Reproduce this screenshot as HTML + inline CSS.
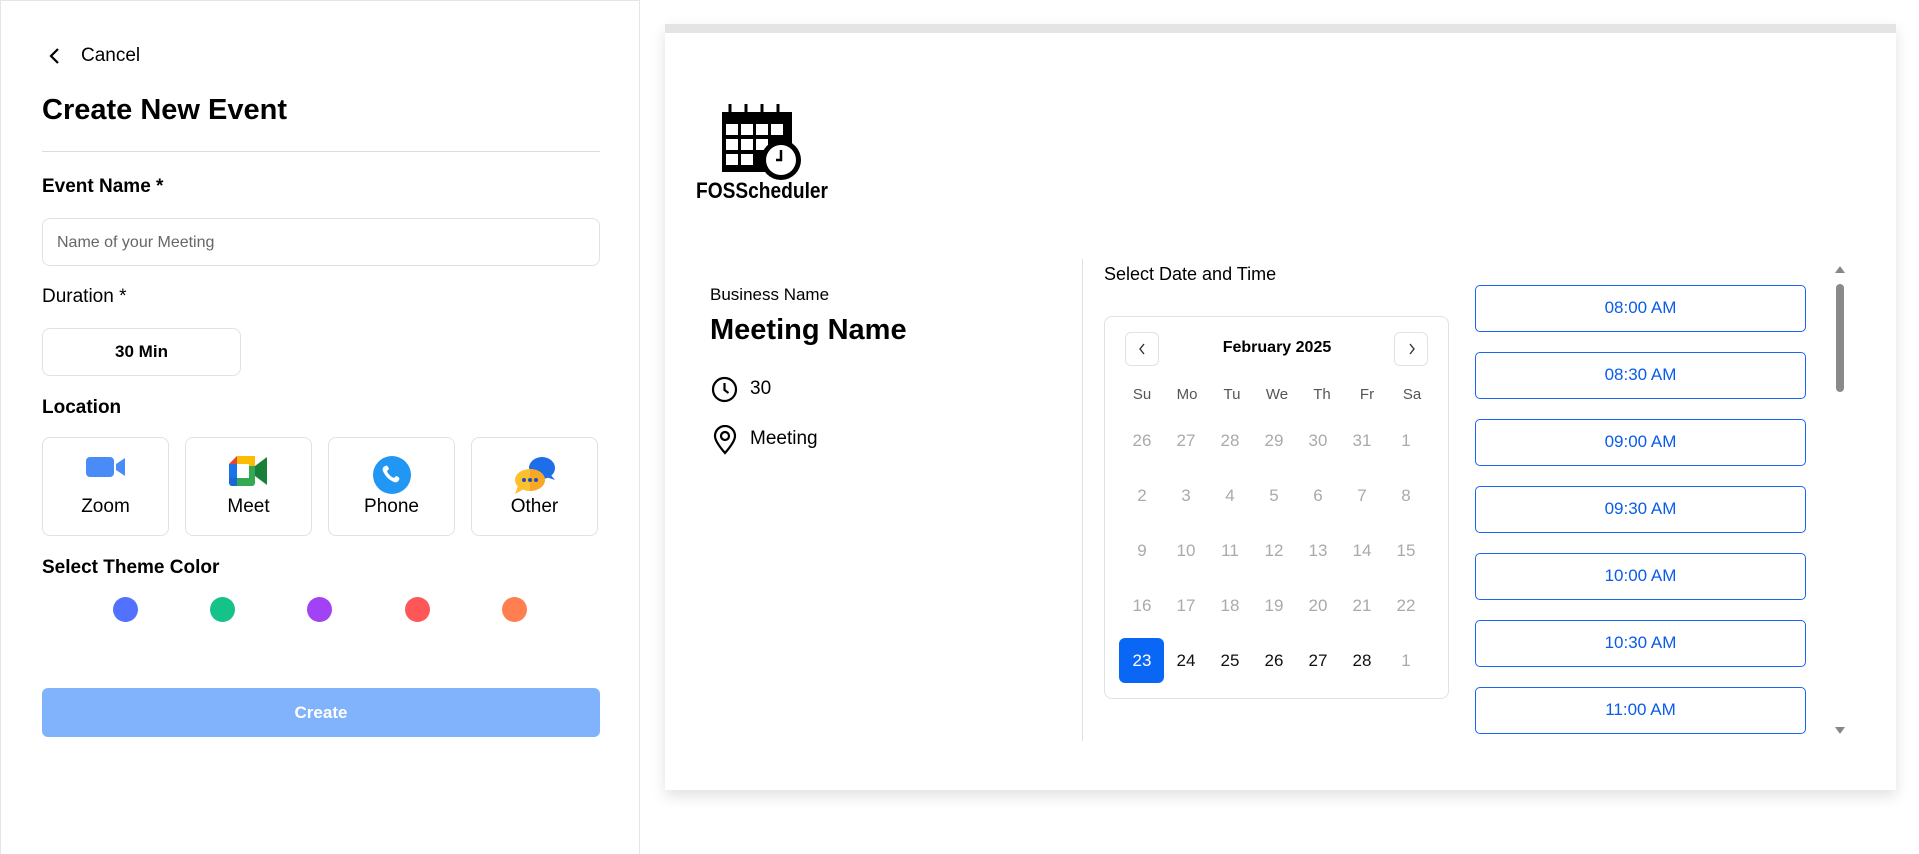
<!DOCTYPE html>
<html><head><meta charset="utf-8"><style>
*{box-sizing:border-box;margin:0;padding:0}
body{width:1919px;height:854px;background:#fff;font-family:"Liberation Sans",sans-serif;position:relative;overflow:hidden;color:#000}
.a{position:absolute}
.left{left:0;top:0;width:640px;height:854px;border-right:1px solid #e5e5e5;border-top:1px solid #e5e5e5;border-left:1px solid #e5e5e5}
.lbl{font-size:19px;font-weight:bold}
.box{border:1px solid #e2e2e2;border-radius:8px;background:#fff}
.loc{top:437px;height:99px;width:127px;text-align:center;font-size:19px}
.loc span{position:absolute;left:0;right:0;top:58px}
.loc svg{position:absolute;left:50%;top:18px;transform:translateX(-50%)}
.dot{width:25px;height:25px;border-radius:50%;top:597px}
.card{left:665px;top:24px;width:1231px;height:766px;background:#fff;box-shadow:0 6px 14px rgba(0,0,0,.12);border-top:9px solid #e4e4e4}
.wd{font-size:15px;color:#555;width:40px;text-align:center}
.d{font-size:17px;color:#aaa;width:44px;text-align:center}
.dk{color:#111}
.slot{left:1475px;width:331px;height:47px;border:1.5px solid #1a66f0;border-radius:5px;color:#0a5ce8;font-size:17px;text-align:center;line-height:44px}
</style></head><body>
<div class="a left"></div>
<svg class="a" style="left:47px;top:47px" width="16" height="18" viewBox="0 0 16 18"><path d="M11 2L4 9l7 7" fill="none" stroke="#000" stroke-width="2.2"/></svg>
<div class="a" style="left:81px;top:45px;font-size:19px">Cancel</div>
<div class="a" style="left:42px;top:94px;font-size:29px;font-weight:bold">Create New Event</div>
<div class="a" style="left:42px;top:151px;width:558px;height:1px;background:#ddd"></div>
<div class="a lbl" style="left:42px;top:176px">Event Name *</div>
<div class="a box" style="left:42px;top:218px;width:558px;height:48px"></div>
<div class="a" style="left:57px;top:234px;font-size:16px;color:#666">Name of your Meeting</div>
<div class="a" style="left:42px;top:286px;font-size:19px">Duration *</div>
<div class="a box" style="left:42px;top:328px;width:199px;height:48px;text-align:center;line-height:46px;font-size:17px;font-weight:bold">30 Min</div>
<div class="a lbl" style="left:42px;top:397px">Location</div>
<div class="a box loc" style="left:42px"><svg width="40" height="22" viewBox="0 0 40 22"><rect x="0" y="1" width="28" height="20" rx="4" fill="#4a8cf7"/><path d="M30 8l9-6v18l-9-6z" fill="#4a8cf7"/></svg><span>Zoom</span></div>
<div class="a box loc" style="left:185px"><svg width="40" height="30" viewBox="0 0 40 30"><path d="M8 0h18v10H0V8z" fill="#fbbc04"/><path d="M0 8h8v14H0z" fill="#1a73e8"/><path d="M0 22h8v8H3a3 3 0 0 1-3-3z" fill="#1967d2"/><path d="M8 0v8H0z" fill="#ea4335"/><path d="M8 22h18v5a3 3 0 0 1-3 3H8z" fill="#34a853"/><path d="M20 10h6v12h-6z" fill="#34a853"/><path d="M26 10l12-9v28l-12-9z" fill="#188038"/><rect x="8" y="8" width="12" height="14" fill="#fff"/></svg><span>Meet</span></div>
<div class="a box loc" style="left:328px"><svg width="38" height="38" viewBox="0 0 38 38"><circle cx="19" cy="19" r="19" fill="#2196f3"/><path d="M12 10c2-1 3 0 4 3l-2 2c1 3 4 6 7 7l2-2c3 1 4 2 3 4-1 2-3 3-5 2-5-2-9-6-11-11-1-2 0-4 2-5z" fill="#fff"/></svg><span>Phone</span></div>
<div class="a box loc" style="left:471px"><svg width="42" height="38" viewBox="0 0 42 38"><ellipse cx="28" cy="12" rx="13" ry="11" fill="#1e6ee8"/><path d="M36 18l5 6-9-3z" fill="#1e6ee8"/><ellipse cx="16" cy="24" rx="15" ry="11" fill="#fbc02d"/><path d="M16 13a15 11 0 0 1 0 22z" fill="#f9a825"/><path d="M4 30l-3 8 9-5z" fill="#fbc02d"/><circle cx="10" cy="24" r="2" fill="#1e4fb8"/><circle cx="16" cy="24" r="2" fill="#1e4fb8"/><circle cx="22" cy="24" r="2" fill="#1e4fb8"/></svg><span>Other</span></div>
<div class="a lbl" style="left:42px;top:557px">Select Theme Color</div>
<div class="a dot" style="left:113px;background:#5271ff"></div>
<div class="a dot" style="left:210px;background:#15c28a"></div>
<div class="a dot" style="left:307px;background:#a142f5"></div>
<div class="a dot" style="left:405px;background:#ff5757"></div>
<div class="a dot" style="left:502px;background:#ff7f50"></div>
<div class="a" style="left:42px;top:688px;width:558px;height:49px;background:#80b3fc;border-radius:6px;color:#fff;font-weight:bold;font-size:17px;text-align:center;line-height:49px">Create</div>

<div class="a card"></div>
<svg class="a" style="left:693px;top:98px" width="140" height="104" viewBox="0 0 140 104">
<rect x="29" y="14" width="70" height="60" fill="#000"/>
<g fill="#fff"><rect x="33" y="26" width="12" height="11"/><rect x="48" y="26" width="12" height="11"/><rect x="63" y="26" width="12" height="11"/><rect x="78" y="26" width="12" height="11"/><rect x="33" y="41" width="12" height="11"/><rect x="48" y="41" width="12" height="11"/><rect x="63" y="41" width="12" height="11"/><rect x="33" y="56" width="12" height="11"/><rect x="48" y="56" width="12" height="11"/></g>
<g fill="none" stroke="#000" stroke-width="3"><path d="M37 16V6M53 16V6M69 16V6M85 16V6"/></g>
<circle cx="88" cy="62" r="20" fill="#000"/><circle cx="88" cy="62" r="15" fill="#fff"/><path d="M88 52v10h-5" stroke="#000" stroke-width="2.5" fill="none"/>
<text x="3" y="100" font-family="Liberation Sans Narrow,Liberation Sans,sans-serif" font-weight="bold" font-size="22" textLength="132" lengthAdjust="spacingAndGlyphs">FOSScheduler</text>
</svg>
<div class="a" style="left:710px;top:285px;font-size:17px">Business Name</div>
<div class="a" style="left:710px;top:314px;font-size:29px;font-weight:bold">Meeting Name</div>
<svg class="a" style="left:711px;top:376px" width="27" height="27" viewBox="0 0 27 27"><circle cx="13.5" cy="13.5" r="11.5" fill="none" stroke="#000" stroke-width="2.2"/><path d="M13.5 7v7l4 3" fill="none" stroke="#000" stroke-width="2.2"/></svg>
<div class="a" style="left:750px;top:378px;font-size:19px">30</div>
<svg class="a" style="left:713px;top:425px" width="24" height="30" viewBox="0 0 24 30"><path d="M12 28C5 20 2 15 2 11a10 10 0 0 1 20 0c0 4-3 9-10 17z" fill="none" stroke="#000" stroke-width="2.2"/><circle cx="12" cy="11" r="4" fill="none" stroke="#000" stroke-width="2.2"/></svg>
<div class="a" style="left:750px;top:428px;font-size:19px">Meeting</div>
<div class="a" style="left:1082px;top:259px;width:1px;height:482px;background:#e2e2e2"></div>
<div class="a" style="left:1104px;top:264px;font-size:18px">Select Date and Time</div>
<div class="a box" style="left:1104px;top:316px;width:345px;height:383px"></div>
<div class="a box" style="left:1125px;top:332px;width:34px;height:34px;border-radius:6px"></div>
<div class="a box" style="left:1394px;top:332px;width:34px;height:34px;border-radius:6px"></div>
<svg class="a" style="left:1137px;top:342px" width="10" height="14"><path d="M7 2L3 7l4 5" fill="none" stroke="#333" stroke-width="1.4"/></svg>
<svg class="a" style="left:1407px;top:342px" width="10" height="14"><path d="M3 2l4 5-4 5" fill="none" stroke="#333" stroke-width="1.4"/></svg>
<div class="a" style="left:1177px;top:339px;width:200px;text-align:center;font-size:16px;font-weight:bold">February 2025</div>
<div class="a" style="left:1122px;top:386px;display:flex;gap:5px">
<div class="wd">Su</div><div class="wd">Mo</div><div class="wd">Tu</div><div class="wd">We</div><div class="wd">Th</div><div class="wd">Fr</div><div class="wd">Sa</div></div>
<div class="a" style="left:1120px;top:430px;line-height:22px">
<div style="display:flex;height:55px"><div class="d">26</div><div class="d">27</div><div class="d">28</div><div class="d">29</div><div class="d">30</div><div class="d">31</div><div class="d">1</div></div>
<div style="display:flex;height:55px"><div class="d">2</div><div class="d">3</div><div class="d">4</div><div class="d">5</div><div class="d">6</div><div class="d">7</div><div class="d">8</div></div>
<div style="display:flex;height:55px"><div class="d">9</div><div class="d">10</div><div class="d">11</div><div class="d">12</div><div class="d">13</div><div class="d">14</div><div class="d">15</div></div>
<div style="display:flex;height:55px"><div class="d">16</div><div class="d">17</div><div class="d">18</div><div class="d">19</div><div class="d">20</div><div class="d">21</div><div class="d">22</div></div>
</div>
<div class="a" style="left:1119px;top:638px;width:45px;height:45px;background:#0a66f5;border-radius:6px"></div>
<div class="a" style="left:1120px;top:650px;display:flex;line-height:22px">
<div class="d" style="color:#fff">23</div><div class="d dk">24</div><div class="d dk">25</div><div class="d dk">26</div><div class="d dk">27</div><div class="d dk">28</div><div class="d">1</div></div>
<div class="a slot" style="top:285px">08:00 AM</div>
<div class="a slot" style="top:352px">08:30 AM</div>
<div class="a slot" style="top:419px">09:00 AM</div>
<div class="a slot" style="top:486px">09:30 AM</div>
<div class="a slot" style="top:553px">10:00 AM</div>
<div class="a slot" style="top:620px">10:30 AM</div>
<div class="a slot" style="top:687px">11:00 AM</div>
<svg class="a" style="left:1834px;top:265px" width="12" height="10"><path d="M6 1l5 7H1z" fill="#888"/></svg>
<div class="a" style="left:1836px;top:284px;width:8px;height:108px;background:#8a8a8a;border-radius:4px"></div>
<svg class="a" style="left:1834px;top:725px" width="12" height="10"><path d="M1 2h10l-5 7z" fill="#888"/></svg>
</body></html>
